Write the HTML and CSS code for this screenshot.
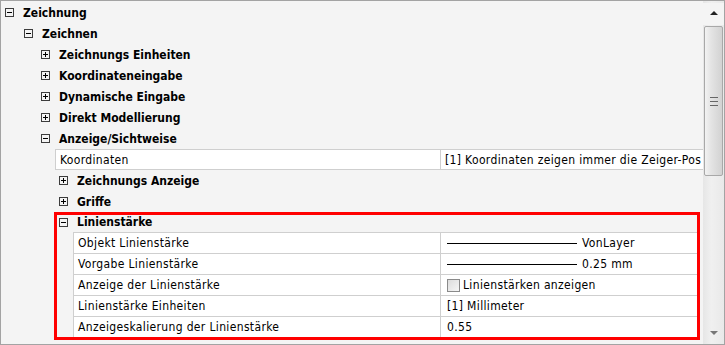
FILE: index.html
```html
<!DOCTYPE html>
<html lang="de">
<head>
    <meta charset="UTF-8">
    <title>Optionen</title>
    <link rel="stylesheet" href="styles.css">
</head>
<body>
    <div class="frame">
        <div class="tree">
            <div class="node lvl0"><span class="exp minus"></span>Zeichnung</div>
            <div class="node lvl1"><span class="exp minus"></span>Zeichnen</div>
            <div class="node lvl2"><span class="exp plus"></span>Zeichnungs Einheiten</div>
            <div class="node lvl2"><span class="exp plus"></span>Koordinateneingabe</div>
            <div class="node lvl2"><span class="exp plus"></span>Dynamische Eingabe</div>
            <div class="node lvl2"><span class="exp plus"></span>Direkt Modellierung</div>
            <div class="node lvl2"><span class="exp minus"></span>Anzeige/Sichtweise</div>
            <div class="props props-top">
                <div class="prop">
                    <div class="name">Koordinaten</div>
                    <div class="value">[1] Koordinaten zeigen immer die Zeiger-Pos</div>
                </div>
            </div>
            <div class="node lvl3"><span class="exp plus"></span>Zeichnungs Anzeige</div>
            <div class="node lvl3"><span class="exp plus"></span>Griffe</div>
            <div class="highlight">
                <div class="node head"><span class="exp minus"></span>Linienstärke</div>
                <div class="props props-sub">
                    <div class="prop">
                        <div class="name">Objekt Linienstärke</div>
                        <div class="value"><span class="line"></span>VonLayer</div>
                    </div>
                    <div class="prop">
                        <div class="name">Vorgabe Linienstärke</div>
                        <div class="value"><span class="line"></span>0.25 mm</div>
                    </div>
                    <div class="prop">
                        <div class="name">Anzeige der Linienstärke</div>
                        <div class="value"><span class="check"></span>Linienstärken anzeigen</div>
                    </div>
                    <div class="prop">
                        <div class="name">Linienstärke Einheiten</div>
                        <div class="value">[1] Millimeter</div>
                    </div>
                    <div class="prop">
                        <div class="name">Anzeigeskalierung der Linienstärke</div>
                        <div class="value">0.55</div>
                    </div>
                </div>
            </div>
        </div>
        <div class="scrollbar">
            <div class="arrow up"></div>
            <div class="thumb"><span class="grip"></span></div>
            <div class="track"></div>
            <div class="arrow down"></div>
        </div>
    </div>
</body>
</html>
```

FILE: styles.css
```css
body {
    margin: 0;
    font-family: 'DejaVu Sans Condensed', 'DejaVu Sans', sans-serif;
    font-stretch: condensed;
    font-size: 12px;
    color: #000;
    background-color: #fff;
}
.frame {
    width: 725px;
    height: 345px;
    box-sizing: border-box;
    border: 1px solid #a3a3a3;
    background-color: #f4f4f4;
    display: flex;
    overflow: hidden;
}
.tree {
    flex: 1;
    padding-top: 1px;
    overflow: hidden;
}
.node {
    height: 21px;
    display: flex;
    align-items: center;
    font-weight: bold;
    white-space: nowrap;
}
.lvl0 { padding-left: 4px; }
.lvl1 { padding-left: 23px; }
.lvl2 { padding-left: 40px; }
.lvl3 { padding-left: 58px; }
.exp {
    width: 9px;
    height: 9px;
    box-sizing: border-box;
    border: 1px solid #3c3c3c;
    margin-right: 9px;
    position: relative;
    flex-shrink: 0;
}
.exp::before, .plus::after {
    content: "";
    position: absolute;
    background-color: #000;
}
.exp::before {
    left: 1px;
    top: 3px;
    width: 5px;
    height: 1px;
}
.plus::after {
    left: 3px;
    top: 1px;
    width: 1px;
    height: 5px;
}
.props {
    background-color: #fff;
    border-top: 1px solid #cfcfcf;
}
.props-top {
    margin-left: 54px;
}
.prop {
    display: grid;
    height: 21px;
    box-sizing: border-box;
    border-bottom: 1px solid #cfcfcf;
    border-left: 1px solid #cfcfcf;
    white-space: nowrap;
    letter-spacing: 0.35px;
}
.props-top .prop {
    grid-template-columns: 385px 1fr;
    height: 20px;
}
.props-sub .prop {
    grid-template-columns: 367px 1fr;
}
.name, .value {
    display: flex;
    align-items: center;
    padding-left: 4px;
    overflow: hidden;
}
.name {
    border-right: 1px solid #cfcfcf;
}
.props-sub .value {
    padding-left: 6px;
}
.highlight {
    margin: 0 3px 0 53px;
    border: 3px solid #f00;
}
.head {
    height: 14px;
    padding: 0 0 3px 2px;
}
.props-sub {
    margin-left: 16px;
    background-color: #f4f4f4;
}
.props-sub .prop {
    background-color: #fff;
}
.props-sub .prop:last-child {
    border-bottom: none;
    height: 20px;
}
.line {
    width: 130px;
    height: 1px;
    background-color: #000;
    margin-right: 5px;
}
.check {
    width: 13px;
    height: 13px;
    box-sizing: border-box;
    border: 1px solid #8a8a8a;
    background: linear-gradient(135deg, #dcdcdc, #f6f6f6);
    margin-right: 3px;
}
.scrollbar {
    width: 21px;
    display: flex;
    flex-direction: column;
    background: linear-gradient(90deg, #e6e6e6, #f0f0f0 40%, #e9e9e9);
}
.arrow {
    height: 22px;
    position: relative;
    flex-shrink: 0;
}
.arrow::after {
    content: "";
    position: absolute;
    left: 7px;
    border-left: 4px solid transparent;
    border-right: 4px solid transparent;
}
.up {
    background-color: #f4f4f4;
    margin-top: 2px;
}
.up::after {
    top: 8px;
    border-bottom: 4px solid #222;
}
.down::after {
    top: 9px;
    border-top: 4px solid #777;
}
.thumb {
    height: 150px;
    margin: 1px 1px 0 1px;
    box-sizing: border-box;
    border: 1px solid #a8a8a8;
    border-radius: 2px;
    background: linear-gradient(90deg, #f2f2f2, #e4e4e4 35%, #d2d2d2);
    display: flex;
    align-items: center;
    justify-content: center;
    flex-shrink: 0;
}
.grip {
    width: 8px;
    height: 7px;
    border-top: 1px solid #666;
    border-bottom: 1px solid #666;
    position: relative;
}
.grip::after {
    content: "";
    position: absolute;
    left: 0;
    right: 0;
    top: 3px;
    height: 1px;
    background-color: #666;
}
.track {
    flex: 1;
}
```
